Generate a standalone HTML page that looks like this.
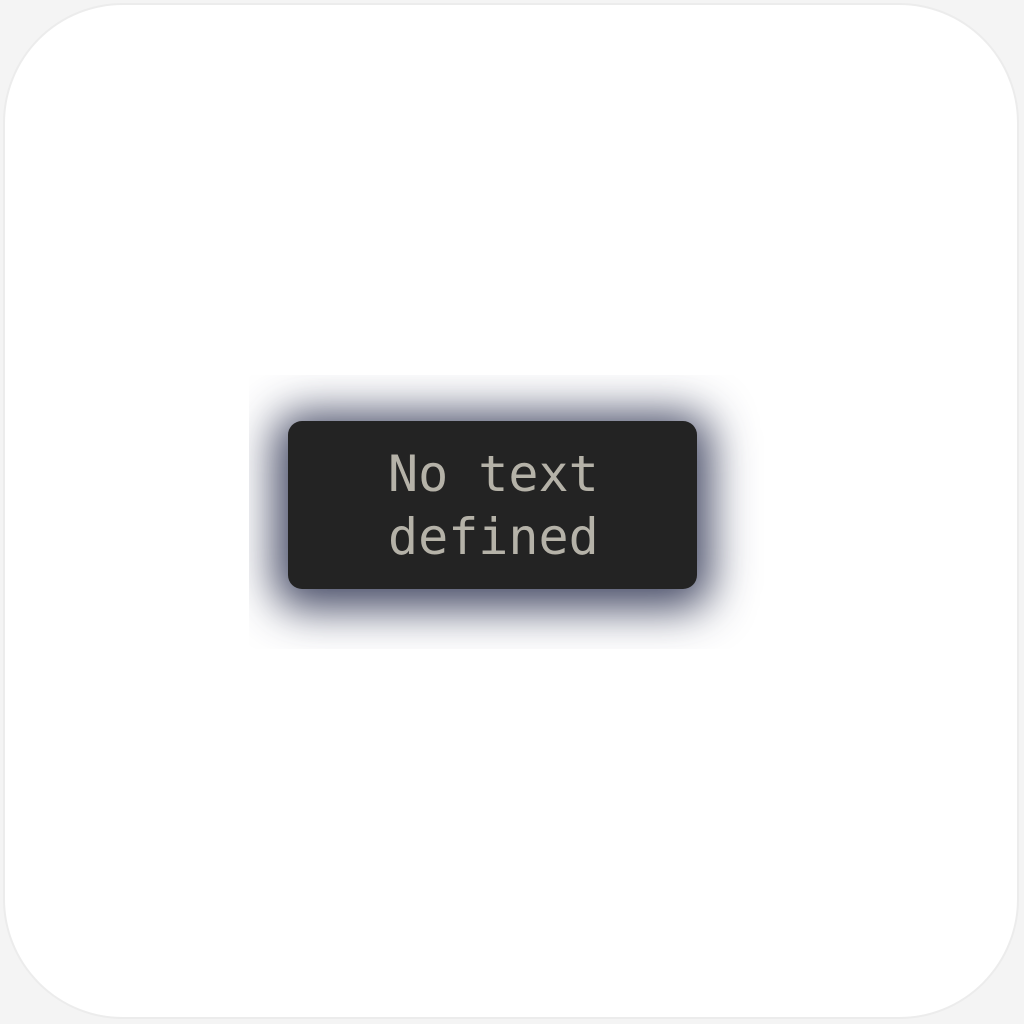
<!DOCTYPE html>
<html><head><style>
html,body{margin:0;padding:0;width:1024px;height:1024px;background:#f4f4f4;overflow:hidden}
.card{position:absolute;left:3px;top:3px;width:1016px;height:1016px;border:2px solid #ececec;border-radius:120px;background:#fff;box-sizing:border-box}
.clip{position:absolute;left:249px;top:375px;width:526px;height:274px;overflow:hidden;background:#fff}
.box{position:absolute;left:39px;top:46px;width:409px;height:168px;border-radius:14px;background:#232323;box-shadow:0 6px 44px 14px rgba(50,55,85,0.9)}
.txt{position:absolute;left:388px;top:443px;width:300px;font-family:"DejaVu Sans Mono","Liberation Mono",monospace;font-size:50px;line-height:63px;color:#b5b2a8;white-space:pre}
</style></head><body>
<div class="card"></div>
<div class="clip"><div class="box"></div></div>
<div class="txt">No text
defined</div>
</body></html>
